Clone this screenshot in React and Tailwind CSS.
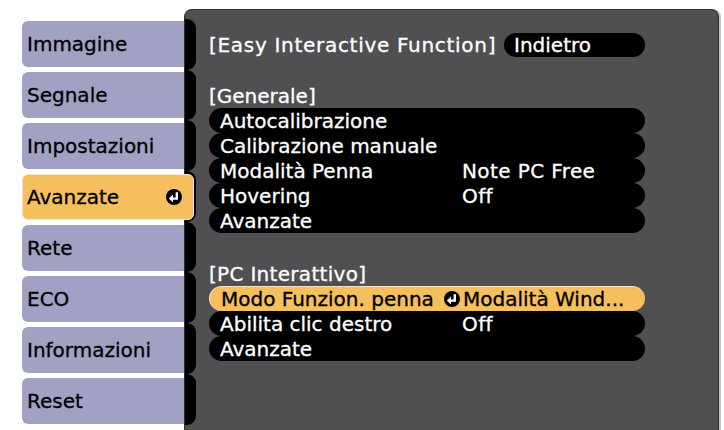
import React from "react";

const FONT = { fontFamily: '"DejaVu Sans", Verdana, sans-serif' };

function EnterIcon({ className = "" }) {
  return (
    <svg viewBox="0 0 16 16" className={className}>
      <circle cx="8" cy="8" r="8" fill="#000" />
      <path d="M10.8 3.2 V9.6 H6" stroke="#fff" strokeWidth="2.4" fill="none" />
      <path d="M2.8 9.6 L7 5.6 L7 13.6 Z" fill="#fff" />
    </svg>
  );
}

const tabs = [
  "Immagine",
  "Segnale",
  "Impostazioni",
  "Avanzate",
  "Rete",
  "ECO",
  "Informazioni",
  "Reset",
];

function Row({ label, value }) {
  return (
    <div className="h-[25px] w-[436px] rounded-full bg-black flex items-center pl-[11px] text-white">
      <span className="w-[242px] whitespace-nowrap">{label}</span>
      {value && <span className="whitespace-nowrap tracking-[0.4px]">{value}</span>}
    </div>
  );
}

export default function App() {
  return (
    <div
      className="w-[724px] h-[430px] bg-white overflow-hidden flex text-[20px] leading-none [-webkit-text-stroke:0.3px_currentColor]"
      style={FONT}
    >
      {/* left tabs */}
      <div className="w-[184px] shrink-0 pl-[22px] pt-[21px] flex flex-col gap-[5px]">
        {tabs.map((t) =>
          t === "Avanzate" ? (
            <div
              key={t}
              className="relative z-10 h-[46px] w-[172px] rounded-[6px] bg-[#f5bf5e] border border-[#f8e6c2] flex items-center pl-[4px] pr-[11px] text-black"
            >
              <span className="flex-1">{t}</span>
              <EnterIcon className="w-[16px] h-[16px]" />
            </div>
          ) : (
            <div
              key={t}
              className="h-[46px] w-[162px] rounded-l-[6px] bg-[#a1a1c3] flex items-center pl-[5px] text-black"
            >
              {t}
            </div>
          )
        )}
      </div>

      {/* main panel */}
      <div className="mt-[9px] w-[535px] h-[430px] shrink-0 rounded-t-[8px] bg-[#505052] border-t border-l border-r border-[#2e2e2e] shadow-[2px_0_0_#c8c8c8] flex">
        {/* black bumps on left edge */}
        <div className="w-[11px] shrink-0 pt-[9px] flex flex-col">
          {tabs.map((t) => (
            <div key={t} className="h-[50.7px] w-[11px] bg-black rounded-r-[9px]" />
          ))}
        </div>

        <div className="pl-[13px] pt-[23px] flex flex-col text-white">
          {/* title */}
          <div className="flex items-center h-[24px]">
            <span className="w-[295px] whitespace-nowrap tracking-[0.7px]">[Easy Interactive Function]</span>
            <div className="h-[24px] w-[141px] rounded-full bg-black flex items-center pl-[10px]">
              Indietro
            </div>
          </div>

          <div className="mt-[26px] h-[25px] flex items-center">[Generale]</div>
          <Row label="Autocalibrazione" />
          <Row label="Calibrazione manuale" />
          <Row label="Modalità Penna" value="Note PC Free" />
          <Row label="Hovering" value="Off" />
          <Row label="Avanzate" />

          <div className="mt-[28px] h-[25px] flex items-center tracking-[0.3px]">[PC Interattivo]</div>
          <div className="h-[25px] w-[436px] rounded-full bg-[#f5bf5e] border-t border-l border-[#f8e6c2] flex items-center pl-[11px] text-black">
            <span className="w-[223px] whitespace-nowrap">Modo Funzion. penna</span>
            <EnterIcon className="w-[16px] h-[16px] mr-[3px]" />
            <span className="whitespace-nowrap">Modalità Wind...</span>
          </div>
          <Row label="Abilita clic destro" value="Off" />
          <Row label="Avanzate" />
        </div>
      </div>
    </div>
  );
}
